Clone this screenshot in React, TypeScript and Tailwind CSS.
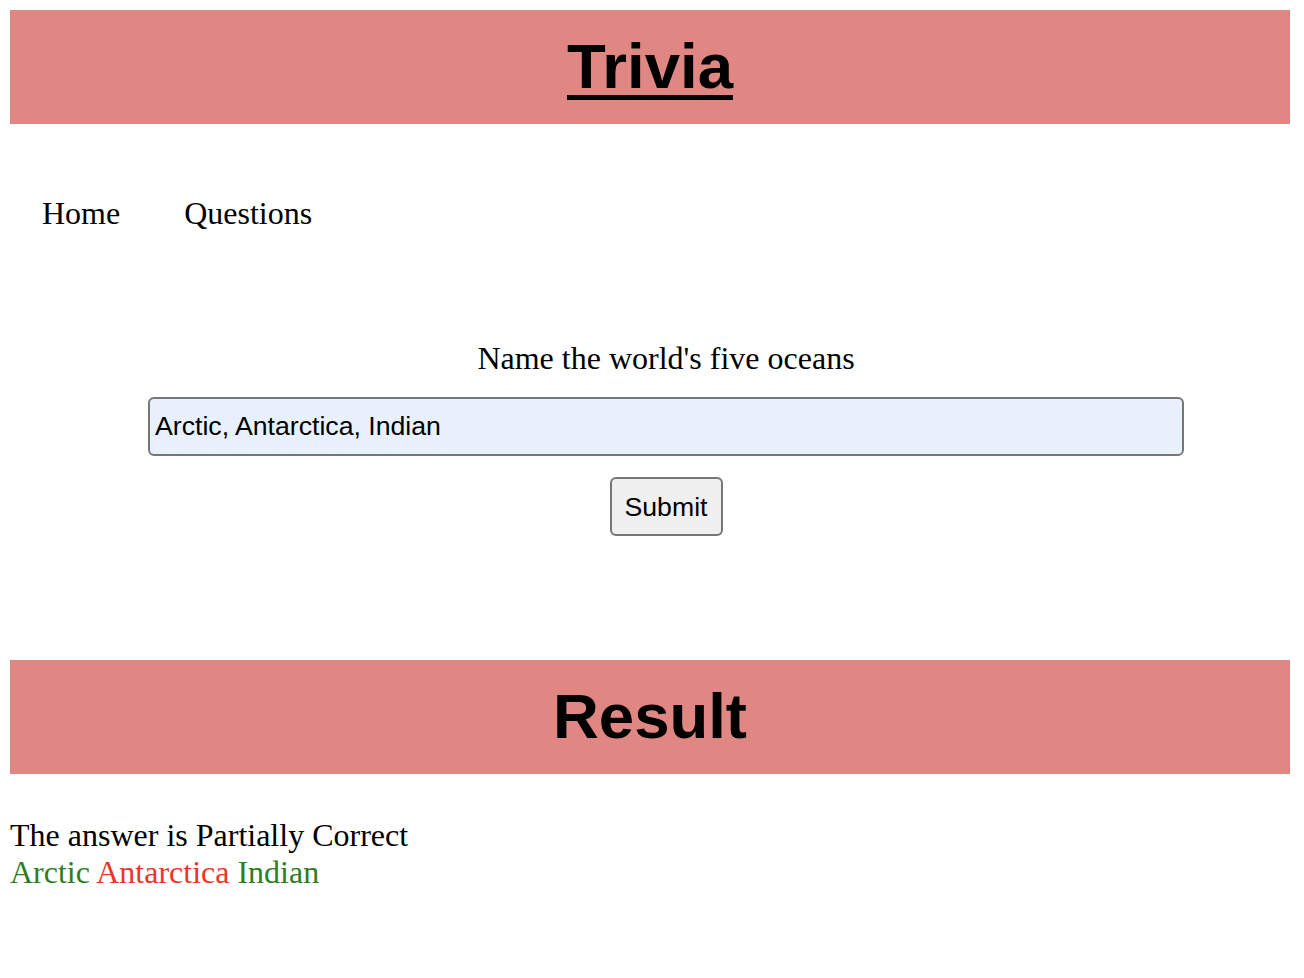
import React from 'react'

const answers = [
  { word: 'Arctic', ok: true },
  { word: 'Antarctica', ok: false },
  { word: 'Indian', ok: true },
]

export default function App() {
  return (
    <div className="min-h-[978px] bg-white pl-[10px] pr-[14px] pt-[10px] font-['Liberation_Serif',serif] text-black">
      <header className="flex h-[114px] items-center justify-center bg-[#e18783]">
        <h1 className="font-['Liberation_Sans',Arial,sans-serif] text-[63.5px] font-bold leading-none underline decoration-[5px] underline-offset-[7px]">
          Trivia
        </h1>
      </header>

      <nav className="mt-[71px] flex gap-[64px] pl-[32px] text-[32px] leading-[37px]">
        <a href="#">Home</a>
        <a href="#">Questions</a>
      </nav>

      <main className="pl-[32px]">
        <form className="mt-[108px] flex flex-col items-center" onSubmit={(e) => e.preventDefault()}>
          <label className="text-[32px] leading-[37px]">Name the world's five oceans</label>
          <input
            defaultValue="Arctic, Antarctica, Indian"
            className="mt-[20px] h-[59px] w-[1036px] rounded-[6px] border-2 border-[#767676] bg-[#e8f0fe] px-[5px] font-['Liberation_Sans',Arial,sans-serif] text-[26.67px] outline-none"
          />
          <button
            type="submit"
            className="mt-[21px] h-[59px] w-[113px] rounded-[6px] border-2 border-[#767676] bg-[#efefef] font-['Liberation_Sans',Arial,sans-serif] text-[26.67px]"
          >
            Submit
          </button>
        </form>
      </main>

      <section className="mt-[124px]">
        <div className="flex h-[114px] items-center justify-center bg-[#e18783]">
          <h2 className="font-['Liberation_Sans',Arial,sans-serif] text-[63.5px] font-bold leading-none">Result</h2>
        </div>
        <div className="mt-[43px] text-[32px] leading-[37px]">
          <p>The answer is Partially Correct</p>
          <p>
            {answers.map((a, i) => (
              <span key={a.word} className={a.ok ? 'text-[#2f7d20]' : 'text-[#e8362a]'}>
                {a.word}
                {i < answers.length - 1 ? ' ' : ''}
              </span>
            ))}
          </p>
        </div>
      </section>
    </div>
  )
}
